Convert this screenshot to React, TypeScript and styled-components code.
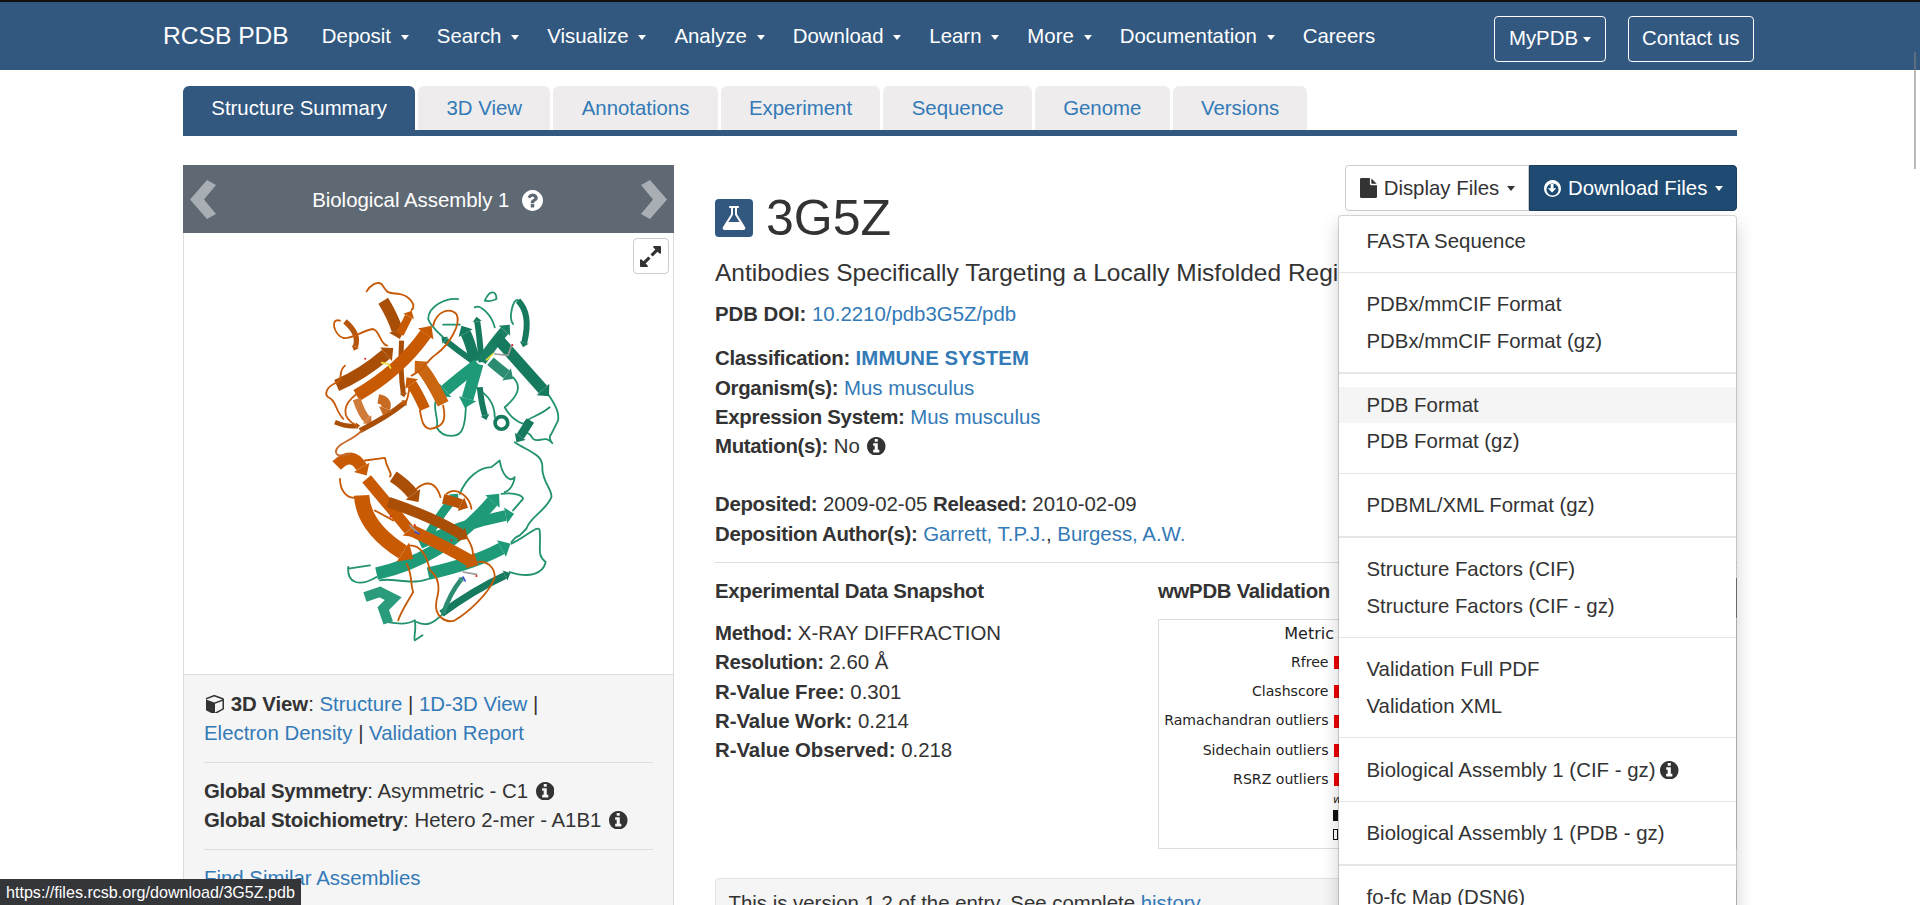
import styled, { createGlobalStyle } from 'styled-components';

const GlobalStyle = createGlobalStyle`
  html, body {
    margin: 0;
    height: 905px;
    overflow: hidden;
    background: #fff;
    font-family: "Liberation Sans", Arial, sans-serif;
    font-size: 20.4px;
    line-height: 29.3px;
    color: #333;
  }
  * { box-sizing: border-box; }
  a { color: #337ab7; text-decoration: none; }
  b { font-weight: 700; letter-spacing: -0.3px; }
  a b { letter-spacing: 0.1px; }
`

const Loose = styled.b`
  letter-spacing: -0.05px;
`

const TopBar = styled.nav`
  height: 70px;
  border-top: 2px solid #111;
  background: #325880;
  display: flex;
  align-items: center;
  padding: 0 166px 0 163px;
  color: #fff;
`

const Brand = styled.a`
  color: #fff;
  font-size: 24.6px;
  margin-right: 19px;
`

const NavItem = styled.a`
  color: #fff;
  padding: 1px 14.1px 0;
`

const Caret = styled.span<{ $color?: string; $gap?: number }>`
  display: inline-block;
  width: 0;
  height: 0;
  margin-left: ${(p) => p.$gap ?? 4}px;
  vertical-align: middle;
  border-top: 5px solid ${(p) => p.$color || '#fff'};
  border-left: 4.5px solid transparent;
  border-right: 4.5px solid transparent;
`

const NavRight = styled.div`
  margin-left: auto;
  margin-top: 6px;
  display: flex;
  gap: 22px;
`

const NavButton = styled.a`
  height: 46px;
  padding: 0 13.5px;
  border: 1px solid #fff;
  border-radius: 4px;
  color: #fff;
  display: flex;
  align-items: center;
  gap: 5px;
`

const Page = styled.div`
  width: 1554px;
  margin: 0 auto;
`

const Tabs = styled.div`
  margin-top: 16px;
  display: flex;
  gap: 3px;
  border-bottom: 6px solid #325880;
`

const Tab = styled.a<{ $active?: boolean }>`
  padding: 1px 28.3px 0;
  display: flex;
  align-items: center;
  border-radius: 6px 6px 0 0;
  background: ${(p) => (p.$active ? '#325880' : '#eeeced')};
  color: ${(p) => (p.$active ? '#fff' : '#337ab7')};
  margin-bottom: ${(p) => (p.$active ? '-6px' : '0')};
  height: ${(p) => (p.$active ? '50px' : '44px')};
  padding-bottom: ${(p) => (p.$active ? '6px' : '0')};
`

const Columns = styled.div`
  margin-top: 29px;
  display: grid;
  grid-template-columns: 490.5px 1fr;
  column-gap: 41.5px;
`

const SidePanel = styled.aside`
  border: 1px solid #ddd;
  border-top: 0;
  height: 760px;
`

const AssemblyHead = styled.div`
  height: 68px;
  margin: 0 -1px;
  background: #5f6973;
  color: #fff;
  display: flex;
  align-items: center;
  justify-content: space-between;
  padding: 0 7px;
  svg.chev { width: 27px; height: 39px; fill: #a8aeb3; }
`

const AssemblyTitle = styled.div`
  display: flex;
  align-items: center;
  gap: 13px;
  margin: 3px 1px 0 0;
`

const Viewer = styled.div`
  position: relative;
  height: 442px;
  padding: 44px 0 0 136px;
  border-bottom: 1px solid #ddd;
`

const ExpandButton = styled.button`
  position: absolute;
  top: 5px;
  right: 4px;
  width: 36px;
  height: 36px;
  padding: 0;
  border: 1px solid #ccc;
  border-radius: 4px;
  background: #fff;
  color: #333;
  display: flex;
  align-items: center;
  justify-content: center;
`

const SideInfo = styled.div`
  background: #f5f5f5;
  padding: 15px 20px;
  height: 250px;
  line-height: 29px;
`

const SideRule = styled.hr`
  border: 0;
  border-top: 1px solid #ddd;
  margin: 14px 0;
`

const IconInline = styled.span`
  display: inline-block;
  vertical-align: -2px;
  margin: 0 1px 0 2px;
  color: #333;
`

const GlyphSvg = styled.svg`
  display: block;
  flex: none;
  fill: currentColor;
`

const Main = styled.main`
  position: relative;
  min-width: 0;
`

const FileTools = styled.div`
  float: right;
  position: relative;
  display: flex;
  height: 46px;
`

const ToolButton = styled.button<{ $primary?: boolean }>`
  font: inherit;
  height: 46px;
  display: flex;
  align-items: center;
  gap: 7px;
  padding: 0 13px 0 14px;
  background: ${(p) => (p.$primary ? '#1f4a72' : '#fff')};
  color: ${(p) => (p.$primary ? '#fff' : '#333')};
  border: 1px solid ${(p) => (p.$primary ? '#1a3d5e' : '#ccc')};
  border-radius: ${(p) => (p.$primary ? '0 4px 4px 0' : '4px 0 0 4px')};
  span { padding-top: 2px; }
`

const Menu = styled.div`
  position: absolute;
  top: 49.5px;
  right: 0;
  width: 399px;
  height: 760px;
  padding: 7px 0;
  background: #fff;
  background-clip: padding-box;
  border: 1px solid rgba(0, 0, 0, 0.15);
  border-radius: 4px;
  box-shadow: 0 8px 17px rgba(0, 0, 0, 0.18);
  z-index: 5;
`

const MenuItem = styled.a<{ $hover?: boolean }>`
  display: flex;
  align-items: center;
  gap: 5px;
  height: 36.7px;
  padding: 1px 27.5px 0;
  color: #333;
  background: ${(p) => (p.$hover ? '#f5f5f5' : 'transparent')};
`

const MenuRule = styled.div<{ $thick?: boolean }>`
  height: ${(p) => (p.$thick ? '2px' : '1px')};
  background: #e5e5e5;
  margin: ${(p) => (p.$thick ? '12.5px 0' : '13px 0')};
`

const Heading = styled.div`
  padding-top: 34px;
  display: flex;
  align-items: center;
  gap: 13px;
  height: 72px;
`

const Badge = styled.span`
  width: 38px;
  height: 38px;
  border-radius: 4px;
  background: #325880;
  color: #fff;
  display: flex;
  align-items: center;
  justify-content: center;
`

const EntryId = styled.h1`
  margin: 0;
  font-size: 50px;
  font-weight: 400;
  line-height: 42px;
  color: #333;
`

const EntryTitle = styled.h2`
  margin: 19px 0 10px;
  font-size: 24.5px;
  font-weight: 400;
  line-height: 34px;
  white-space: nowrap;
  overflow: hidden;
`

const InfoBlock = styled.div<{ $gap?: number }>`
  margin-bottom: ${(p) => p.$gap ?? 0}px;
`

const Rule = styled.hr`
  border: 0;
  border-top: 1px solid #ddd;
  margin: 0 0 14px;
`

const Snapshot = styled.div`
  display: grid;
  grid-template-columns: 443px 1fr;
`

const SubHead = styled.h4`
  margin: 0 0 13px;
  font-size: 20.4px;
  line-height: 29px;
  font-weight: 700;
  letter-spacing: -0.3px;
`

const ReportButton = styled.a`
  float: right;
  height: 40px;
  margin-top: 1px;
  padding: 0 14px;
  display: flex;
  align-items: center;
  border: 1px solid #888;
  font-weight: 400;
`

const ChartBox = styled.div`
  height: 230px;
  border: 1px solid #ddd;
  font-family: "DejaVu Sans", sans-serif;
  font-size: 14.1px;
  color: #222;
  clear: both;
`

const ChartRow = styled.div<{ $head?: boolean }>`
  display: flex;
  align-items: center;
  height: ${(p) => (p.$head ? '28px' : '29.2px')};
  font-size: ${(p) => (p.$head ? '16px' : '14.1px')};
`

const ChartLabel = styled.span<{ $head?: boolean }>`
  width: ${(p) => (p.$head ? '175px' : '169.5px')};
  text-align: right;
  white-space: nowrap;
`

const RedBar = styled.span`
  margin-left: 5px;
  width: 40px;
  height: 13px;
  background: #ee0000;
`

const LegendLabel = styled.div`
  height: 12px;
  padding-left: 174px;
  line-height: 8px;
`

const LegendText = styled.i`
  font-size: 11px;
`

const LegendRow = styled.div`
  display: flex;
  align-items: center;
  height: 19px;
  padding-left: 174px;
`

const LegendBox = styled.span<{ $fill: boolean }>`
  width: 5px;
  height: 11px;
  border: 1px solid #111;
  background: ${(p) => (p.$fill ? '#111' : '#fff')};
`

const Notice = styled.div`
  margin-top: 29px;
  height: 80px;
  padding: 9.500px 12.500px;
  background: #f5f5f5;
  border: 1px solid #e3e3e3;
  border-radius: 4px;
`

const StatusBubble = styled.div`
  position: fixed;
  left: 0;
  bottom: 0;
  height: 26px;
  width: 301px;
  padding: 0 6px;
  background: #35363a;
  color: #fff;
  font-size: 16.1px;
  line-height: 26px;
  white-space: nowrap;
  z-index: 9;
`

const ScrollThumb = styled.div`
  position: fixed;
  top: 52px;
  left: 1914px;
  width: 2px;
  height: 117px;
  background: rgba(130, 130, 130, 0.55);
  z-index: 9;
`

const navItems = ['Deposit', 'Search', 'Visualize', 'Analyze', 'Download', 'Learn', 'More', 'Documentation'];
const tabs = ['Structure Summary', '3D View', 'Annotations', 'Experiment', 'Sequence', 'Genome', 'Versions'];
const metrics = ['Rfree', 'Clashscore', 'Ramachandran outliers', 'Sidechain outliers', 'RSRZ outliers'];

// font awesome 4 glyphs
const ICON = {
  info: 'M1152 1376v-160q0-14-9-23t-23-9h-96v-512q0-14-9-23t-23-9h-320q-14 0-23 9t-9 23v160q0 14 9 23t23 9h96v320h-96q-14 0-23 9t-9 23v160q0 14 9 23t23 9h448q14 0 23-9t9-23zm-128-896v-160q0-14-9-23t-23-9h-192q-14 0-23 9t-9 23v160q0 14 9 23t23 9h192q14 0 23-9t9-23zm640 416q0 209-103 385.500t-279.500 279.500-385.500 103-385.500-103-279.500-279.500-103-385.500 103-385.500 279.500-279.500 385.500-103 385.500 103 279.500 279.500 103 385.500z',
  question: 'M1024 1376v-192q0-14-9-23t-23-9h-192q-14 0-23 9t-9 23v192q0 14 9 23t23 9h192q14 0 23-9t9-23zm256-672q0-88-55.500-163t-138.500-116-170-41q-243 0-371 213-15 24 8 42l132 100q7 6 19 6 16 0 25-12 53-68 86-92 34-24 86-24 48 0 85.500 26t37.500 59q0 38-20 61t-68 45q-63 28-115.500 86.500t-52.500 125.500v36q0 14 9 23t23 9h192q14 0 23-9t9-23q0-19 21.500-49.500t54.500-49.500q32-18 49-28.500t46-35 44.500-48 28-60.500 12.500-81zm384 192q0 209-103 385.500t-279.500 279.500-385.500 103-385.500-103-279.500-279.500-103-385.500 103-385.500 279.500-279.500 385.500-103 385.500 103 279.500 279.500 103 385.500z',
  flask: 'M1591 1448q56 89 21.500 152.500t-140.500 63.500h-1152q-106 0-140.500-63.500t21.500-152.500l503-793v-399h-64q-26 0-45-19t-19-45 19-45 45-19h512q26 0 45 19t19 45-19 45-45 19h-64v399zm-779-725l-272 429h712l-272-429-20-31v-436h-128v436z',
  file: 'M1152 512v-472q22 14 36 28l408 408q14 14 28 36h-472zm-128 32q0 40 28 68t68 28h544v1056q0 40-28 68t-68 28h-1344q-40 0-68-28t-28-68v-1600q0-40 28-68t68-28h800v544z',
  download: 'M1212 896q0 14-9 24l-320 320q-9 9-23 9-14 0-23-9l-321-321q-14-15-7-35 8-19 30-19h192v-352q0-14 9-23t23-9h192q14 0 23 9t9 23v352h192q14 0 23 9t9 23zm-316-448q-148 0-273 73t-198 198-73 273 73 273 198 198 273 73 273-73 198-198 73-273-73-273-198-198-273-73zm768 448q0 209-103 385.500t-279.500 279.500-385.500 103-385.500-103-279.500-279.500-103-385.500 103-385.500 279.500-279.500 385.500-103 385.500 103 279.500 279.500 103 385.500z',
  cube: 'M896 1629l640-349v-636l-640 233v752zm-64-865l698-254-698-254-698 254zm832-252v768q0 35-18 65t-49 47l-704 384q-28 16-61 16t-61-16l-704-384q-31-17-49-47t-18-65v-768q0-40 23-73t61-47l704-256q22-8 44-8t44 8l704 256q38 14 61 47t23 73z',
  expand: 'M883 1056q0 13-10 23l-332 332 144 144q19 19 19 45t-19 45-45 19h-448q-26 0-45-19t-19-45v-448q0-26 19-45t45-19 45 19l144 144 332-332q10-10 23-10t23 10l114 114q10 10 10 23zm781-864v448q0 26-19 45t-45 19-45-19l-144-144-332 332q-10 10-23 10t-23-10l-114-114q-10-10-10-23t10-23l332-332-144-144q-19-19-19-45t19-45 45-19h448q26 0 45 19t19 45z',
};

function Glyph({ d, size = 18.5, height, box = '128 128 1536 1536' }: { d: string; size?: number; height?: number; box?: string }) {
  return (
    <GlyphSvg width={size} height={height ?? size} viewBox={box}>
      <path d={d} fillRule="evenodd" />
    </GlyphSvg>
  );
}

const ORANGE = '#c85a04';
const ORANGE_DK = '#a94e07';
const ORANGE_LT = '#cf7a38';
const GREEN = '#1f9a78';
const GREEN_DK = '#167a5e';

type Strand = [number, number, number, number, number, number, number, string];

// x1 y1, control, x2 y2, width, colour
const strands: Strand[] = [
  [470, 465, 550, 430, 640, 352, 36, ORANGE_DK],
  [790, 520, 750, 440, 705, 390, 36, '#c9660f'],
  [735, 535, 710, 480, 680, 440, 32, ORANGE],
  [610, 210, 640, 260, 660, 325, 34, ORANGE_DK],
  [660, 310, 675, 280, 695, 240, 24, ORANGE],
  [665, 330, 660, 420, 672, 500, 15, ORANGE_DK],
  [530, 495, 660, 420, 755, 285, 38, ORANGE],
  [495, 272, 540, 310, 522, 360, 16, '#b5560f'],
  [530, 505, 545, 550, 575, 580, 24, ORANGE_LT],
  [465, 575, 500, 590, 540, 585, 14, ORANGE_DK],
  [540, 600, 620, 560, 682, 510, 16, ORANGE_DK],
  [595, 505, 625, 510, 610, 555, 28, '#c76a22'],
  [885, 392, 870, 330, 845, 285, 32, GREEN_DK],
  [880, 392, 835, 360, 785, 320, 18, GREEN_DK],
  [905, 395, 900, 320, 890, 258, 18, GREEN_DK],
  [905, 392, 940, 340, 990, 282, 30, '#1a8064'],
  [950, 320, 1030, 410, 1108, 497, 34, GREEN_DK],
  [1015, 210, 1055, 250, 1030, 350, 18, GREEN_DK],
  [895, 400, 835, 445, 775, 498, 36, GREEN],
  [893, 400, 875, 465, 855, 532, 36, GREEN],
  [932, 392, 965, 420, 1000, 445, 30, '#2c8c72'],
  [900, 470, 905, 520, 920, 568, 18, GREEN_DK],
  [1052, 570, 1030, 605, 1010, 635, 26, GREEN_DK],
  [590, 1030, 790, 985, 958, 790, 38, GREEN],
  [740, 925, 780, 850, 835, 790, 26, GREEN],
  [720, 940, 850, 880, 1003, 850, 32, GREEN],
  [745, 1030, 880, 1000, 992, 940, 38, GREEN],
  [785, 1150, 880, 1080, 992, 1028, 22, GREEN_DK],
  [790, 1150, 810, 1090, 850, 1040, 14, '#2c8c72'],
  [470, 705, 515, 660, 560, 735, 36, ORANGE],
  [640, 738, 680, 765, 716, 815, 36, ORANGE_DK],
  [560, 745, 640, 840, 705, 920, 34, ORANGE],
  [545, 795, 550, 890, 700, 985, 46, ORANGE],
  [625, 815, 760, 860, 865, 925, 32, ORANGE_DK],
  [695, 900, 800, 950, 895, 1005, 36, ORANGE],
  [790, 805, 830, 815, 865, 832, 30, '#b85205'],
];

const orangeLoops = [
  'M480 270C450 260 460 310 490 322C520 325 545 300 580 295C600 300 600 340 622 345',
  'M560 182C570 165 590 150 605 160C625 190 620 185 660 190C690 195 710 225 695 238',
  'M760 285C770 240 810 230 830 250C845 280 810 340 770 370C745 385 730 420 695 435',
  'M495 405C470 425 495 450 465 458C440 470 432 490 445 500C470 510 465 540 490 565',
  'M530 490C490 520 480 560 530 585',
  'M790 525C800 570 790 590 750 595C725 590 725 560 720 540',
  'M690 470C680 500 690 515 660 520',
  'M555 690L615 682C620 715 640 730 630 738',
  'M480 745C480 780 500 810 540 800',
  'M710 775C745 745 770 760 782 800',
  'M800 790C830 765 870 800 875 835',
  'M585 840L640 870',
  'M690 945C720 945 740 970 750 1020C770 1035 785 1060 770 1110C760 1160 800 1180 825 1170C860 1150 930 1090 945 1040C945 1010 920 990 895 995',
  'M680 1000C700 1040 690 1060 700 1085C680 1120 665 1140 655 1170',
  'M860 920C880 950 885 970 875 990',
];

const greenLoops = [
  'M790 282L840 282',
  'M835 205C800 200 745 225 745 265C750 285 780 310 790 320',
  'M915 210C930 175 950 180 950 205C930 215 925 210 915 210',
  'M885 230C900 220 935 250 945 290',
  'M1000 280C985 260 1000 205 1015 208',
  'M770 505C755 530 780 570 770 590C790 625 840 625 850 590C860 560 855 540 860 520',
  'M890 470C915 490 945 510 945 560',
  'M1000 440C1030 470 1010 500 975 530C990 560 1030 590 1040 575',
  'M1105 490C1125 520 1140 545 1135 570C1125 590 1120 600 1115 610C1105 620 1115 635 1118 638C1095 610 1080 640 1060 625C1045 600 1035 605 1030 620',
  'M1110 530C1080 555 1050 560 1035 575',
  'M1005 635C1040 660 1090 670 1088 710C1085 750 1120 780 1115 800C1100 840 1050 860 1040 895L1020 915C1000 925 1010 920 995 935',
  'M505 1010C500 1060 540 1070 590 1040',
  'M505 1015L570 1005',
  'M840 790C860 740 900 710 935 710L960 690C965 730 990 760 1005 740C1000 770 990 780 975 785',
  'M965 790C1000 785 1030 795 1030 805L1000 840',
  'M995 940C1040 920 1075 880 1080 900C1085 950 1070 975 1098 995C1090 1030 1050 1045 990 1025',
  'M620 1175C650 1180 680 1185 705 1170C710 1200 700 1225 705 1230L728 1215',
  'M710 1175C740 1190 760 1180 790 1150',
  'M600 1050C640 1040 700 1070 760 1040',
];

function StrandShape({ s }: { s: Strand }) {
  const [x1, y1, cx, cy, x2, y2, w, color] = s;
  const len = Math.hypot(x2 - cx, y2 - cy) || 1;
  const ux = (x2 - cx) / len;
  const uy = (y2 - cy) / len;
  const headLen = w * 0.8;
  const bx = x2 - ux * headLen;
  const by = y2 - uy * headLen;
  const hw = w * 0.75;
  return (
    <g>
      <path d={`M${x1} ${y1}Q${cx} ${cy} ${bx} ${by}`} fill="none" stroke={color} strokeWidth={w} />
      <polygon points={`${x2},${y2} ${bx - uy * hw},${by + ux * hw} ${bx + uy * hw},${by - ux * hw}`} fill={color} />
    </g>
  );
}

function Protein() {
  return (
    <svg width="243" height="367" viewBox="420 140 730 1100">
      <g fill="none" strokeWidth="5.500" strokeLinecap="round" strokeLinejoin="round">
        {greenLoops.map((d) => <path key={d} d={d} stroke="#23926f" />)}
      </g>
      <circle cx="965" cy="577" r="19" fill="none" stroke={GREEN_DK} strokeWidth="11" />
      <path d="M555 1100L600 1085L640 1105L610 1135L625 1178" fill="none" stroke="#2a9c7c" strokeWidth="30" />
      {strands.slice(12, 29).map((s) => <StrandShape key={s.join()} s={s} />)}
      {strands.slice(0, 12).map((s) => <StrandShape key={s.join()} s={s} />)}
      {strands.slice(29).map((s) => <StrandShape key={s.join()} s={s} />)}
      <g fill="none" strokeWidth="5.500" strokeLinecap="round" strokeLinejoin="round">
        {orangeLoops.map((d) => <path key={d} d={d} stroke="#c65a08" />)}
        <path d="M545 600C520 630 465 640 468 665C472 680 490 675 510 670" stroke="#c66a2a" />
      </g>
      <g fill="none" strokeWidth="5" strokeLinecap="round">
        <path d="M605 396L625 400L632 412" stroke="#e8e23a" />
        <path d="M920 388L940 370" stroke="#e8e23a" />
        <path d="M945 370L985 374L995 345" stroke="#999" />
        <path d="M850 1025L890 1032" stroke="#999" />
        <path d="M850 1040L856 1052" stroke="#3b49d8" />
        <path d="M690 885L715 908" stroke="#999" />
        <path d="M705 905L718 910" stroke="#3b49d8" />
      </g>
      <g fill="#e01b1b">
        <circle cx="556" cy="384" r="3" />
        <circle cx="998" cy="343" r="3" />
        <circle cx="704" cy="884" r="3" />
        <circle cx="632" cy="858" r="3" />
        <circle cx="815" cy="930" r="3" />
        <circle cx="890" cy="1037" r="3" />
      </g>
    </svg>
  );
}

function Info() {
  return (
    <IconInline>
      <Glyph d={ICON.info} />
    </IconInline>
  );
}

function App() {
  return (
    <>
      <GlobalStyle />
      <TopBar>
        <Brand>RCSB PDB</Brand>
        {navItems.map((item) => (
          <NavItem key={item}>{item} <Caret /></NavItem>
        ))}
        <NavItem>Careers</NavItem>
        <NavRight>
          <NavButton>MyPDB <Caret $gap={0} /></NavButton>
          <NavButton>Contact us</NavButton>
        </NavRight>
      </TopBar>
      <Page>
        <Tabs>
          {tabs.map((t, i) => (
            <Tab key={t} $active={i === 0}>{t}</Tab>
          ))}
        </Tabs>
        <Columns>
          <SidePanel>
            <AssemblyHead>
              <svg className="chev" viewBox="0 0 27 39"><path d="M17 0l9 5-12 14.500 12 14.500-9 5L0 19.500z" /></svg>
              <AssemblyTitle>
                Biological Assembly 1
                <Glyph d={ICON.question} size={21} />
              </AssemblyTitle>
              <svg className="chev" viewBox="0 0 27 39"><path d="M10 0L1 5l12 14.500L1 34l9 5 17-19.500z" /></svg>
            </AssemblyHead>
            <Viewer>
              <ExpandButton aria-label="Expand">
                <Glyph d={ICON.expand} size={21} />
              </ExpandButton>
              <Protein />
            </Viewer>
            <SideInfo>
              <IconInline><Glyph d={ICON.cube} size={18} /></IconInline> <Loose>3D View</Loose>: <a>Structure</a> | <a>1D-3D View</a> |<br />
              <a>Electron Density</a> | <a>Validation Report</a>
              <SideRule />
              <b>Global Symmetry</b>: Asymmetric - C1 <Info /><br />
              <b>Global Stoichiometry</b>: Hetero 2-mer - A1B1 <Info />
              <SideRule />
              <a>Find Similar Assemblies</a>
            </SideInfo>
          </SidePanel>
          <Main>
            <FileTools>
              <ToolButton>
                <Glyph d={ICON.file} size={17} height={20} box="128 0 1536 1792" />
                <span>Display Files <Caret $color="#333" $gap={2} /></span>
              </ToolButton>
              <ToolButton $primary>
                <Glyph d={ICON.download} size={17} />
                <span>Download Files <Caret $gap={2} /></span>
              </ToolButton>
              <Menu>
                <MenuItem>FASTA Sequence</MenuItem>
                <MenuRule />
                <MenuItem>PDBx/mmCIF Format</MenuItem>
                <MenuItem>PDBx/mmCIF Format (gz)</MenuItem>
                <MenuRule $thick />
                <MenuItem $hover>PDB Format</MenuItem>
                <MenuItem>PDB Format (gz)</MenuItem>
                <MenuRule />
                <MenuItem>PDBML/XML Format (gz)</MenuItem>
                <MenuRule $thick />
                <MenuItem>Structure Factors (CIF)</MenuItem>
                <MenuItem>Structure Factors (CIF - gz)</MenuItem>
                <MenuRule />
                <MenuItem>Validation Full PDF</MenuItem>
                <MenuItem>Validation XML</MenuItem>
                <MenuRule />
                <MenuItem>Biological Assembly 1 (CIF - gz) <Glyph d={ICON.info} /></MenuItem>
                <MenuRule />
                <MenuItem>Biological Assembly 1 (PDB - gz)</MenuItem>
                <MenuRule $thick />
                <MenuItem>fo-fc Map (DSN6)</MenuItem>
              </Menu>
            </FileTools>
            <Heading>
              <Badge><Glyph d={ICON.flask} size={24} /></Badge>
              <EntryId>3G5Z</EntryId>
            </Heading>
            <EntryTitle>Antibodies Specifically Targeting a Locally Misfolded Region of Prion Protein</EntryTitle>
            <InfoBlock $gap={15}>
              <Loose>PDB DOI:</Loose> <a>10.2210/pdb3G5Z/pdb</a>
            </InfoBlock>
            <InfoBlock $gap={29}>
              <b>Classification:</b> <a><b>IMMUNE SYSTEM</b></a><br />
              <b>Organism(s):</b> <a>Mus musculus</a><br />
              <b>Expression System:</b> <a>Mus musculus</a><br />
              <b>Mutation(s):</b> No <Info />
            </InfoBlock>
            <InfoBlock $gap={13}>
              <b>Deposited:</b> 2009-02-05 <b>Released:</b> 2010-02-09<br />
              <b>Deposition Author(s):</b> <a>Garrett, T.P.J.</a>, <a>Burgess, A.W.</a>
            </InfoBlock>
            <Rule />
            <Snapshot>
              <div>
                <SubHead>Experimental Data Snapshot</SubHead>
                <b>Method:</b> X-RAY DIFFRACTION<br />
                <b>Resolution:</b> 2.60 Å<br />
                <Loose>R-Value Free:</Loose> 0.301<br />
                <Loose>R-Value Work:</Loose> 0.214<br />
                <Loose>R-Value Observed:</Loose> 0.218
              </div>
              <div>
                <SubHead>
                  <ReportButton>Full Report</ReportButton>
                  wwPDB Validation
                </SubHead>
                <ChartBox>
                  <ChartRow $head><ChartLabel $head>Metric</ChartLabel></ChartRow>
                  {metrics.map((m) => (
                    <ChartRow key={m}>
                      <ChartLabel>{m}</ChartLabel>
                      <RedBar />
                    </ChartRow>
                  ))}
                  <LegendLabel><LegendText>w</LegendText></LegendLabel>
                  <LegendRow><LegendBox $fill /></LegendRow>
                  <LegendRow><LegendBox $fill={false} /></LegendRow>
                </ChartBox>
              </div>
            </Snapshot>
            <Notice>This is version 1.2 of the entry. See complete <a>history</a>.</Notice>
          </Main>
        </Columns>
      </Page>
      <StatusBubble>https://files.rcsb.org/download/3G5Z.pdb</StatusBubble>
      <ScrollThumb />
    </>
  );
}

export default App;
